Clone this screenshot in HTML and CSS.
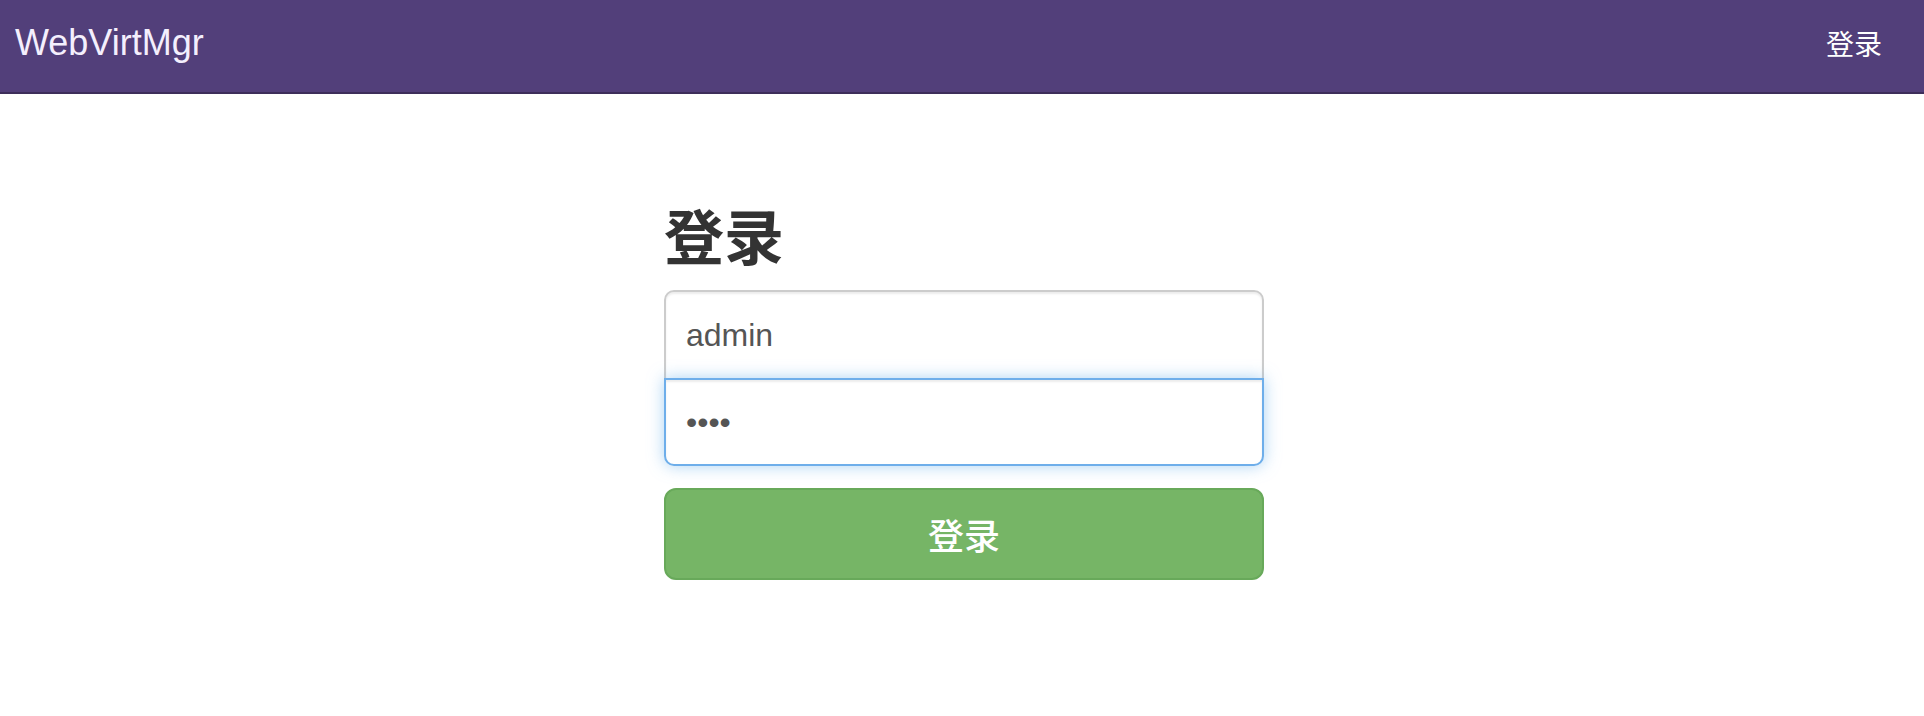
FILE: index.html
```html
<!DOCTYPE html>
<html lang="zh-CN">
<head>
<meta charset="utf-8">
<title>WebVirtMgr</title>
<link rel="stylesheet" href="styles.css">
</head>
<body>
<header class="navbar">
  <div class="brand">WebVirtMgr</div>
  <nav class="nav-right"><a class="nav-link" href="#">登录</a></nav>
</header>
<main class="page">
  <form class="signin">
    <h2 class="signin-heading">登录</h2>
    <input class="field field-top" type="text" name="username" value="admin">
    <input class="field field-bottom is-focused" type="password" name="password" value="1234">
    <button class="btn-signin" type="button">登录</button>
  </form>
</main>
</body>
</html>
```
FILE: styles.css
```css
html, body {
  margin: 0;
  padding: 0;
  background: #ffffff;
}

body {
  font-family: "Liberation Sans", "Noto Sans CJK SC", sans-serif;
  color: #333333;
}

.navbar {
  box-sizing: border-box;
  height: 94px;
  background: #523f7a;
  border-bottom: 2px solid #3d2e5a;
  display: flex;
  align-items: center;
  justify-content: space-between;
  padding: 0 42px 7px 15px;
}

.brand {
  font-family: "Liberation Sans", sans-serif;
  font-size: 36px;
  line-height: 40px;
  color: #f4effd;
}

.nav-link {
  font-family: "Noto Sans CJK SC", sans-serif;
  font-size: 28px;
  line-height: 40px;
  color: #ffffff;
  text-decoration: none;
}

.page {
  display: flex;
  justify-content: center;
  padding: 107px 0 0 4px;
}

.signin {
  width: 600px;
  display: flex;
  flex-direction: column;
}

.signin-heading {
  margin: 0 0 23px 0;
  font-family: "Noto Sans CJK SC", sans-serif;
  font-weight: 700;
  font-size: 60px;
  line-height: 66px;
  color: #333333;
}

.field {
  display: block;
  box-sizing: border-box;
  width: 100%;
  margin: 0;
  padding: 0 20px;
  border: 2px solid #cccccc;
  border-radius: 10px;
  background: #ffffff;
  font-family: "Liberation Sans", sans-serif;
  font-size: 32px;
  color: #555555;
  box-shadow: inset 0 2px 2px rgba(0, 0, 0, 0.075);
  outline: none;
}

.field-top {
  height: 90px;
  margin-bottom: -2px;
  border-bottom-left-radius: 0;
  border-bottom-right-radius: 0;
}

.field-bottom {
  height: 88px;
  border-top-left-radius: 0;
  border-top-right-radius: 0;
}

.is-focused {
  border-color: #6eaeea;
  box-shadow: inset 0 2px 2px rgba(0, 0, 0, 0.075), 0 0 16px rgba(102, 175, 233, 0.55);
}

.btn-signin {
  box-sizing: border-box;
  margin-top: 22px;
  width: 100%;
  height: 92px;
  border: 2px solid #68a95a;
  border-radius: 12px;
  background: #76b566;
  color: #ffffff;
  font-family: "Noto Sans CJK SC", sans-serif;
  font-size: 36px;
  font-weight: 500;
  line-height: 1;
  padding: 0;
  cursor: pointer;
}
```
